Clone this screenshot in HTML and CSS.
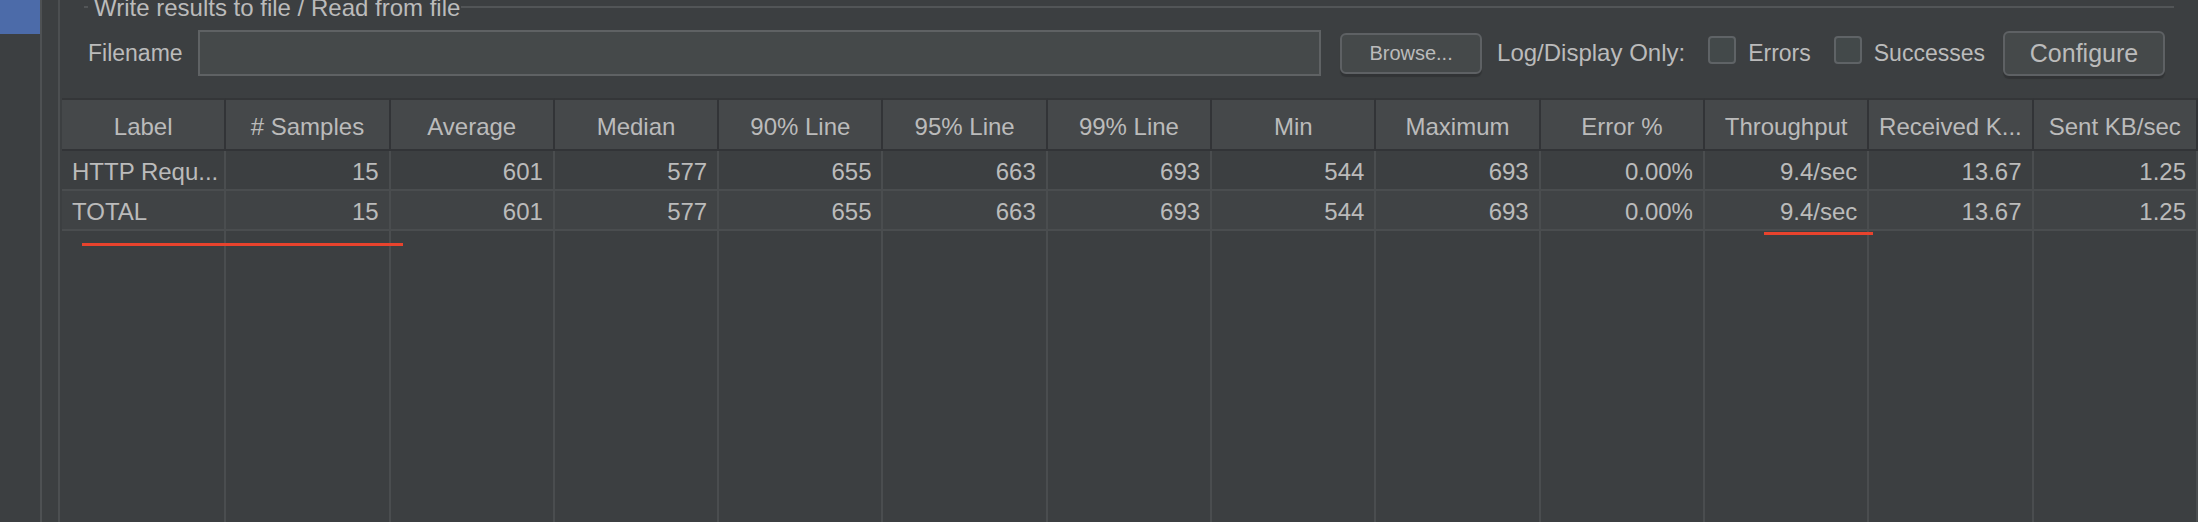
FILE: index.html
```html
<!DOCTYPE html>
<html lang="en">
<head>
<meta charset="utf-8">
<title>Summary Report</title>
<link rel="stylesheet" href="styles.css">
</head>
<body>
<div class="app">
  <aside class="sidebar"><div class="sidebar-tab"></div></aside>
  <div class="gutter"></div>
  <main class="main">
    <div class="titled">
      <span class="dash"></span>
      <span class="legend">Write results to file / Read from file</span>
      <span class="rule"></span>
    </div>
    <div class="file-row">
      <label class="lbl lbl-filename">Filename</label>
      <div class="field"></div>
      <button class="btn btn-browse">Browse...</button>
      <span class="lbl lbl-log">Log/Display Only:</span>
      <span class="check"></span>
      <span class="lbl lbl-errors">Errors</span>
      <span class="check"></span>
      <span class="lbl lbl-succ">Successes</span>
      <button class="btn btn-configure">Configure</button>
    </div>
    <table class="results">
      <thead>
        <tr>
          <th>Label</th><th># Samples</th><th>Average</th><th>Median</th><th>90% Line</th><th>95% Line</th><th>99% Line</th><th>Min</th><th>Maximum</th><th>Error %</th><th>Throughput</th><th>Received K...</th><th>Sent KB/sec</th>
        </tr>
      </thead>
      <tbody>
        <tr class="row">
          <td class="txt">HTTP Requ...</td><td>15</td><td>601</td><td>577</td><td>655</td><td>663</td><td>693</td><td>544</td><td>693</td><td>0.00%</td><td>9.4/sec</td><td>13.67</td><td>1.25</td>
        </tr>
        <tr class="row row-total">
          <td class="txt">TOTAL</td><td>15</td><td>601</td><td>577</td><td>655</td><td>663</td><td>693</td><td>544</td><td>693</td><td>0.00%</td><td>9.4/sec</td><td>13.67</td><td>1.25</td>
        </tr>
        <tr class="filler">
          <td></td><td></td><td></td><td></td><td></td><td></td><td></td><td></td><td></td><td></td><td></td><td></td><td></td>
        </tr>
      </tbody>
    </table>
  </main>
</div>
<div class="mark mark-total"></div>
<div class="mark mark-throughput"></div>
</body>
</html>
```
FILE: styles.css
```css
* { box-sizing: border-box; }
html, body {
  margin: 0;
  padding: 0;
}
body {
  width: 2198px;
  height: 522px;
  overflow: hidden;
  position: relative;
  background: #3c3f41;
  color: #bbbbbb;
  font-family: "Liberation Sans", Arial, sans-serif;
}
.app {
  display: flex;
  height: 522px;
}
.sidebar {
  width: 42px;
  border-right: 2px solid #4e5153;
  flex: none;
}
.sidebar-tab {
  width: 40px;
  height: 34px;
  background: #4c6ba9;
}
.gutter {
  width: 18px;
  border-right: 2px solid #4c4f51;
  flex: none;
}
.main {
  flex: 1;
  display: flex;
  flex-direction: column;
  min-width: 0;
}
.titled {
  display: flex;
  align-items: flex-start;
  height: 16px;
  padding: 0 24px;
}
.dash, .rule {
  height: 2px;
  margin-top: 6px;
  background: #525557;
}
.dash { width: 4px; flex: none; }
.rule { flex: 1; }
.legend {
  font-size: 24px;
  line-height: 16px;
  white-space: nowrap;
  margin: 0 1px 0 6px;
}
.file-row {
  display: flex;
  align-items: center;
  height: 46px;
  margin-top: 14px;
  padding: 0 33px 0 28px;
}
.lbl {
  font-size: 23px;
  white-space: nowrap;
}
.lbl-filename { margin-right: 15px; }
.lbl-log { font-size: 24px; margin-left: 15px; margin-right: 23px; }
.lbl-errors { margin-left: 12px; margin-right: 23px; }
.lbl-succ { margin-left: 12px; margin-right: 18px; }
.field {
  flex: 1;
  height: 46px;
  background: #45494a;
  border: 2px solid #5f6264;
}
.btn {
  font-family: "Liberation Sans", Arial, sans-serif;
  color: #bbbbbb;
  background: #45494a;
  border: 2px solid #5e6164;
  border-radius: 6px;
  box-shadow: 0 3px 1px rgba(0, 0, 0, 0.18);
  padding: 0;
  flex: none;
}
.btn-browse {
  width: 142px;
  height: 41px;
  margin-left: 19px;
  font-size: 20px;
}
.btn-configure {
  width: 162px;
  height: 45px;
  font-size: 25px;
}
.check {
  width: 28px;
  height: 28px;
  flex: none;
  background: #43494a;
  border: 2px solid #5f6366;
  border-radius: 4px;
  margin-bottom: 6px;
}
.results {
  margin-top: 22px;
  margin-left: 2px;
  width: 2136px;
  table-layout: fixed;
  border-collapse: separate;
  border-spacing: 0;
  font-size: 24px;
}
.results th {
  height: 53px;
  padding: 4px 4px 0;
  font-weight: normal;
  text-align: center;
  white-space: nowrap;
  overflow: hidden;
  background: #45484a;
  border-top: 2px solid #343638;
  border-bottom: 2px solid #323437;
  border-right: 2px solid #323437;
}
.results td {
  padding: 3px 10px 0;
  text-align: right;
  white-space: nowrap;
  overflow: hidden;
  border-right: 2px solid #4a4d4f;
}
.row td {
  height: 40px;
  border-bottom: 2px solid #4a4d4f;
}
.row-total td { background: #404345; }
.results td.txt { text-align: left; padding-left: 10px; }
.filler td { height: 300px; }
.mark {
  position: absolute;
  height: 3px;
  background: #e8432d;
}
.mark-total { left: 82px; top: 243px; width: 321px; }
.mark-throughput { left: 1764px; top: 232px; width: 109px; }
```
